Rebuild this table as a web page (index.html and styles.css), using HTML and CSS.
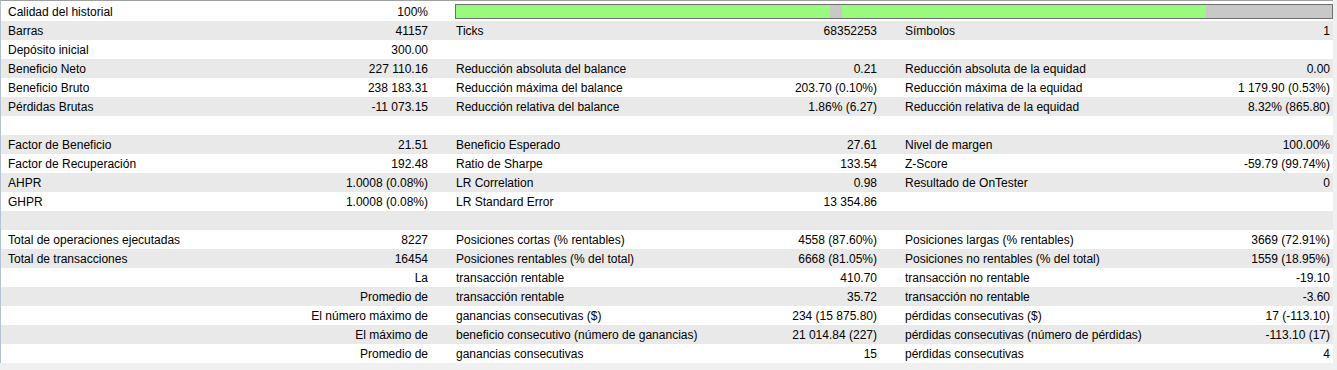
FILE: index.html
```html
<!DOCTYPE html>
<html lang="es">
<head>
<meta charset="utf-8">
<title>Informe</title>
<link rel="stylesheet" href="styles.css">
</head>
<body>
<div class="frame">
  <div class="report">
    <div class="row">
      <div class="cell"><span>Calidad del historial</span><span>100%</span></div>
      <div class="cell bar-cell">
        <div class="bar">
          <div class="seg ok" style="width:374px"></div>
          <div class="seg miss" style="width:12px"></div>
          <div class="seg ok" style="width:364px"></div>
          <div class="seg miss fill"></div>
        </div>
      </div>
    </div>
    <div class="row alt">
      <div class="cell"><span>Barras</span><span>41157</span></div>
      <div class="cell"><span>Ticks</span><span>68352253</span></div>
      <div class="cell"><span>Símbolos</span><span>1</span></div>
    </div>
    <div class="row">
      <div class="cell"><span>Depósito inicial</span><span>300.00</span></div>
      <div class="cell"></div>
      <div class="cell"></div>
    </div>
    <div class="row alt">
      <div class="cell"><span>Beneficio Neto</span><span>227 110.16</span></div>
      <div class="cell"><span>Reducción absoluta del balance</span><span>0.21</span></div>
      <div class="cell"><span>Reducción absoluta de la equidad</span><span>0.00</span></div>
    </div>
    <div class="row">
      <div class="cell"><span>Beneficio Bruto</span><span>238 183.31</span></div>
      <div class="cell"><span>Reducción máxima del balance</span><span>203.70 (0.10%)</span></div>
      <div class="cell"><span>Reducción máxima de la equidad</span><span>1 179.90 (0.53%)</span></div>
    </div>
    <div class="row alt">
      <div class="cell"><span>Pérdidas Brutas</span><span>-11 073.15</span></div>
      <div class="cell"><span>Reducción relativa del balance</span><span>1.86% (6.27)</span></div>
      <div class="cell"><span>Reducción relativa de la equidad</span><span>8.32% (865.80)</span></div>
    </div>
    <div class="row">
      <div class="cell"></div><div class="cell"></div><div class="cell"></div>
    </div>
    <div class="row alt">
      <div class="cell"><span>Factor de Beneficio</span><span>21.51</span></div>
      <div class="cell"><span>Beneficio Esperado</span><span>27.61</span></div>
      <div class="cell"><span>Nivel de margen</span><span>100.00%</span></div>
    </div>
    <div class="row">
      <div class="cell"><span>Factor de Recuperación</span><span>192.48</span></div>
      <div class="cell"><span>Ratio de Sharpe</span><span>133.54</span></div>
      <div class="cell"><span>Z-Score</span><span>-59.79 (99.74%)</span></div>
    </div>
    <div class="row alt">
      <div class="cell"><span>AHPR</span><span>1.0008 (0.08%)</span></div>
      <div class="cell"><span>LR Correlation</span><span>0.98</span></div>
      <div class="cell"><span>Resultado de OnTester</span><span>0</span></div>
    </div>
    <div class="row">
      <div class="cell"><span>GHPR</span><span>1.0008 (0.08%)</span></div>
      <div class="cell"><span>LR Standard Error</span><span>13 354.86</span></div>
      <div class="cell"></div>
    </div>
    <div class="row alt">
      <div class="cell"></div><div class="cell"></div><div class="cell"></div>
    </div>
    <div class="row">
      <div class="cell"><span>Total de operaciones ejecutadas</span><span>8227</span></div>
      <div class="cell"><span>Posiciones cortas (% rentables)</span><span>4558 (87.60%)</span></div>
      <div class="cell"><span>Posiciones largas (% rentables)</span><span>3669 (72.91%)</span></div>
    </div>
    <div class="row alt">
      <div class="cell"><span>Total de transacciones</span><span>16454</span></div>
      <div class="cell"><span>Posiciones rentables (% del total)</span><span>6668 (81.05%)</span></div>
      <div class="cell"><span>Posiciones no rentables (% del total)</span><span>1559 (18.95%)</span></div>
    </div>
    <div class="row">
      <div class="cell right"><span>La</span></div>
      <div class="cell"><span>transacción rentable</span><span>410.70</span></div>
      <div class="cell"><span>transacción no rentable</span><span>-19.10</span></div>
    </div>
    <div class="row alt">
      <div class="cell right"><span>Promedio de</span></div>
      <div class="cell"><span>transacción rentable</span><span>35.72</span></div>
      <div class="cell"><span>transacción no rentable</span><span>-3.60</span></div>
    </div>
    <div class="row">
      <div class="cell right"><span>El número máximo de</span></div>
      <div class="cell"><span>ganancias consecutivas ($)</span><span>234 (15 875.80)</span></div>
      <div class="cell"><span>pérdidas consecutivas ($)</span><span>17 (-113.10)</span></div>
    </div>
    <div class="row alt">
      <div class="cell right"><span>El máximo de</span></div>
      <div class="cell"><span>beneficio consecutivo (número de ganancias)</span><span>21 014.84 (227)</span></div>
      <div class="cell"><span>pérdidas consecutivas (número de pérdidas)</span><span>-113.10 (17)</span></div>
    </div>
    <div class="row">
      <div class="cell right"><span>Promedio de</span></div>
      <div class="cell"><span>ganancias consecutivas</span><span>15</span></div>
      <div class="cell"><span>pérdidas consecutivas</span><span>4</span></div>
    </div>
  </div>
</div>
</body>
</html>
```
FILE: styles.css
```css
html, body {
  margin: 0;
  padding: 0;
  background: #f0f0f0;
}

body {
  font-family: "Liberation Sans", Arial, sans-serif;
  font-size: 12px;
  color: #000;
  width: 1337px;
  height: 370px;
  overflow: hidden;
}

.frame {
  width: 1332px;
  border-top: 1px solid #a0a0a0;
  border-left: 1px solid #b4c3d3;
  background: #f0f0f0;
}

.report {
  padding-top: 1px;
  background: #ffffff;
  display: flex;
  flex-direction: column;
}

.row {
  display: grid;
  grid-template-columns: 449px 449px 1fr;
  height: 19px;
  line-height: 19px;
  background: #ffffff;
}

.row.alt {
  background: #e9e9e9;
}

.cell {
  display: flex;
  justify-content: space-between;
  box-sizing: border-box;
  height: 19px;
  padding: 1px 22px 0 7px;
  white-space: nowrap;
  overflow: hidden;
}

.row .cell:nth-child(2) {
  padding-left: 6px;
}

.row .cell:nth-child(3) {
  padding: 1px 3px 0 6px;
}

.cell.right {
  justify-content: flex-end;
}

.bar-cell {
  grid-column: 2 / 4;
  padding: 2px 0 0 5px !important;
  align-items: flex-start;
}

.bar {
  display: flex;
  width: 876px;
  height: 13px;
  border: 1px solid #6e6e6e;
}

.seg {
  height: 100%;
}

.seg.ok {
  background: #98fb7e;
}

.seg.miss {
  background: #c8c8c8;
}

.seg.fill {
  flex: 1;
}
```
